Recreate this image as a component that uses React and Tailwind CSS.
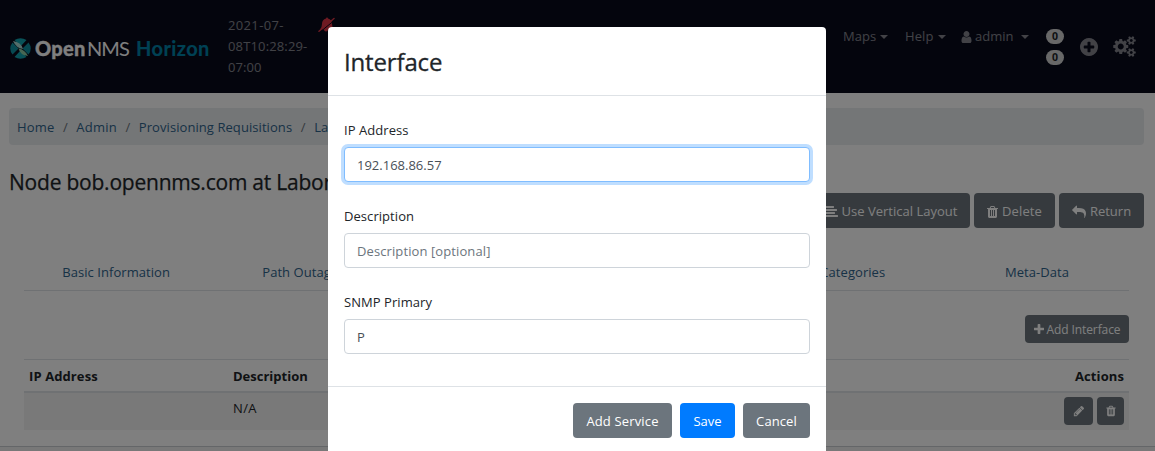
import React from "react";

const ICONS = {
  trash: "M704 1376v-704q0-14-9-23t-23-9h-64q-14 0-23 9t-9 23v704q0 14 9 23t23 9h64q14 0 23-9t9-23zm256 0v-704q0-14-9-23t-23-9h-64q-14 0-23 9t-9 23v704q0 14 9 23t23 9h64q14 0 23-9t9-23zm256 0v-704q0-14-9-23t-23-9h-64q-14 0-23 9t-9 23v704q0 14 9 23t23 9h64q14 0 23-9t9-23zm-544-992h448l-48-117q-7-9-17-11h-317q-10 2-17 11zm928 32v64q0 14-9 23t-23 9h-96v948q0 83-47 143.500t-113 60.500h-832q-66 0-113-58.500t-47-141.500v-952h-96q-14 0-23-9t-9-23v-64q0-14 9-23t23-9h309l70-167q15-37 54-63t79-26h320q40 0 79 26t54 63l70 167h309q14 0 23 9t9 23z",
  user: "M1536 1399q0 109-62.500 187t-150.500 78h-854q-88 0-150.500-78t-62.500-187q0-85 8.500-160.500t31.500-152 58.500-131 94-89 134.500-34.500q131 128 313 128t313-128q76 0 134.500 34.500t94 89 58.500 131 31.500 152 8.500 160.500zm-256-887q0 159-112.500 271.500t-271.500 112.500-271.500-112.500-112.500-271.500 112.500-271.500 271.500-112.500 271.500 112.500 112.500 271.500z",
  share: "M1792 640q0 26-19 45l-512 512q-19 19-45 19t-45-19-19-45v-256h-224q-98 0-175.500 6t-154 21.500-133 42.500-105.500 69.500-80 101-48.500 138.500-17.500 181q0 55 5 123 0 6 2.500 23.500t2.500 26.500q0 15-8.500 25t-23.500 10q-16 0-28-17-7-9-13-22t-13.500-30-10.500-24q-127-285-127-451 0-199 53-333 162-403 875-403h224v-256q0-26 19-45t45-19 45 19l512 512q19 19 19 45z",
  pencil: "M491 1536l91-91-235-235-91 91v107h128v128h107zm523-928q0-22-22-22-10 0-17 7l-542 542q-7 7-7 17 0 22 22 22 10 0 17-7l542-542q7-7 7-17zm-54-192l416 416-832 832h-416v-416zm683 96q0 53-37 90l-166 166-416-416 166-165q36-38 90-38 53 0 91 38l235 234q37 39 37 91z",
  plus: "M1600 736v192q0 40-28 68t-68 28h-416v416q0 40-28 68t-68 28h-192q-40 0-68-28t-28-68v-416h-416q-40 0-68-28t-28-68v-192q0-40 28-68t68-28h416v-416q0-40 28-68t68-28h192q40 0 68 28t28 68v416h416q40 0 68 28t28 68z",
  plusCircle: "M1344 960v-128q0-26-19-45t-45-19h-256v-256q0-26-19-45t-45-19h-128q-26 0-45 19t-19 45v256h-256q-26 0-45 19t-19 45v128q0 26 19 45t45 19h256v256q0 26 19 45t45 19h128q26 0 45-19t19-45v-256h256q26 0 45-19t19-45zm320-64q0 209-103 385.500t-279.500 279.500-385.500 103-385.500-103-279.500-279.500-103-385.500 103-385.500 279.500-279.500 385.500-103 385.500 103 279.500 279.500 103 385.500z",
  align: "M1792 1344v128q0 26-19 45t-45 19h-1664q-26 0-45-19t-19-45v-128q0-26 19-45t45-19h1664q26 0 45 19t19 45zm-384-384v128q0 26-19 45t-45 19h-1280q-26 0-45-19t-19-45v-128q0-26 19-45t45-19h1280q26 0 45 19t19 45zm256-384v128q0 26-19 45t-45 19h-1536q-26 0-45-19t-19-45v-128q0-26 19-45t45-19h1536q26 0 45 19t19 45zm-384-384v128q0 26-19 45t-45 19h-1152q-26 0-45-19t-19-45v-128q0-26 19-45t45-19h1152q26 0 45 19t19 45z",
};
const SMALL_GEAR =
  "v140q0 16-149 31-12 27-30 52 51 113 51 138 0 4-4 7-122 71-124 71-8 0-46-47t-52-68q-20 2-30 2t-30-2q-14 21-52 68t-46 47q-2 0-124-71-4-3-4-7 0-25 51-138-18-25-30-52-149-15-149-31v-140q0-16 149-31 13-29 30-52-51-113-51-138 0-4 4-7 4-2 35-20t59-34 30-16q8 0 46 46.500t52 67.500q20-2 30-2t30 2q51-71 92-112l6-2q4 0 124 70 4 3 4 7 0 25-51 138 17 23 30 52 149 15 149 31z";
const COGS =
  "M896 896q0-106-75-181t-181-75-181 75-75 181 75 181 181 75 181-75 75-181zm768 512q0-52-38-90t-90-38-90 38-38 90q0 53 37.500 90.500t90.500 37.500 90.500-37.500 37.500-90.500zm0-1024q0-52-38-90t-90-38-90 38-38 90q0 53 37.500 90.500t90.500 37.500 90.500-37.500 37.500-90.500zm-384 421v185q0 10-7 19.500t-16 10.500l-155 24q-11 35-32 76 34 48 90 115 7 11 7 20 0 12-7 19-23 30-82.500 89.500t-78.500 59.500q-11 0-21-7l-115-90q-37 19-77 31-11 108-23 155-7 24-30 24h-186q-11 0-20-7.500t-10-17.500l-23-153q-34-10-75-31l-118 89q-7 7-20 7-11 0-21-8-144-133-144-160 0-9 7-19 10-14 41-53t47-61q-23-44-35-82l-152-24q-10-1-17-9.500t-7-19.500v-185q0-10 7-19.500t16-10.500l155-24q11-35 32-76-34-48-90-115-7-11-7-20 0-12 7-20 22-30 82-89t79-59q11 0 21 7l115 90q34-18 77-32 11-108 23-154 7-24 30-24h186q11 0 20 7.500t10 17.500l23 153q34 10 75 31l118-89q8-7 20-7 11 0 21 8 144 133 144 160 0 8-7 19-12 16-42 54t-45 60q23 48 34 82l152 23q10 2 17 10.500t7 19.500z" +
  "M1920 1338" + SMALL_GEAR + "M1920 314" + SMALL_GEAR;

function Icon({ name, box = "0 0 1792 1792", className }) {
  return (
    <svg viewBox={box} className={"shrink-0 " + className} fill="currentColor">
      <path d={ICONS[name]} />
    </svg>
  );
}

function Logo() {
  return (
    <div className="flex h-[30px] w-[200px] shrink-0 items-center">
      <svg viewBox="0 0 42 42" className="ml-px h-[21px] w-[21px] shrink-0">
        <path fill="#12a5b0" d="M9 4Q21-3 33 4L21 17zM9 38Q21 45 33 38L21 25z" />
        <path fill="#0f93a3" d="M5 9Q-4 21 5 33L17 21zM37 9Q46 21 37 33L25 21z" />
        <path fill="#a9dcd6" d="M6 6Q22 8 26 22Q12 20 6 6z" />
        <path fill="#8fcfa6" d="M36 36Q20 34 17 21Q30 23 36 36z" />
      </svg>
      <div className="ml-[4px] flex whitespace-nowrap font-[Lato] text-[20px] leading-[28px] text-white">
        <span className="w-[52px] font-black tracking-[0.3px] [-webkit-text-stroke:0.3px_currentColor]">Open</span>
        <span className="w-[49px] tracking-[-0.9px]">NMS</span>
        <span className="font-bold tracking-[0.4px] text-[#0082a8] [-webkit-text-stroke:0.2px_currentColor]">Horizon</span>
      </div>
    </div>
  );
}

function BellSlash() {
  return (
    <svg viewBox="0 0 34 30" className="ml-[6px] mt-[17px] h-[15px] w-[17px] shrink-0">
      <path fill="#dc3545" d="M16 3Q16 1 18 1T20 3Q28 5 28 14Q28 20 32 25H20Q20 29 16 29T12 25H4Q8 20 8 14Q8 5 16 3z" />
      <path stroke="#080a1b" strokeWidth="2" d="M2 31.500L35 5" />
      <path stroke="#dc3545" strokeWidth="3" strokeLinecap="round" d="M2 28.500L32 3" />
    </svg>
  );
}

function Caret({ className = "" }) {
  return <span className={"inline-block border-x-[4px] border-t-[4px] border-x-transparent border-t-current " + className} />;
}

function NavBar() {
  return (
    <nav className="flex h-[93px] shrink-0 justify-between bg-[#080a1b] text-white/50">
      <div className="flex pl-[9px]">
        <div className="pt-[33px]"><Logo /></div>
        <div className="ml-[19px] w-[84px] whitespace-nowrap pt-[15px] leading-[21px]">
          <div className="tracking-[0.35px]">2021-07-</div>
          <div className="tracking-[0.15px]">08T10:28:29-</div>
          <div className="tracking-[0.1px]">07:00</div>
        </div>
        <BellSlash />
      </div>
      <div className="flex">
        <div className="mt-[26px] flex h-[21px] w-[62px] items-center"><span className="tracking-[0.05px]">Maps</span><Caret className="ml-[4px]" /></div>
        <div className="mt-[26px] flex h-[21px] w-[56px] items-center"><span className="tracking-[0.1px]">Help</span><Caret className="ml-[4px]" /></div>
        <div className="mt-[26px] flex h-[21px] w-[85px] items-center"><Icon name="user" box="256 0 1280 1792" className="h-[14px] w-[11px]" /><span className="ml-[3px]">admin</span><Caret className="ml-[8px]" /></div>
        <div className="flex w-[18px] flex-col gap-[6px] pt-[29px]">
          {[0, 1].map((i) => (
            <span key={i} className="flex h-[15px] items-center justify-center rounded-full bg-[#d0d0d0] pt-px text-[10.5px] font-bold text-[#212529]">0</span>
          ))}
        </div>
        <Icon name="plusCircle" box="128 128 1536 1536" className="ml-[16px] mt-[38px] h-[18px] w-[18px]" />
        <svg viewBox="0 0 1920 1792" className="ml-[15px] mr-[19px] mt-[36px] h-[21px] w-[23px]" fill="currentColor"><path d={COGS} /></svg>
      </div>
    </nav>
  );
}

function Crumb({ children, first, className = "" }) {
  return (
    <span className="flex whitespace-nowrap">
      {!first && <span className="w-[22px] text-center text-[#6c757d]">/</span>}
      <span className={className}>{children}</span>
    </span>
  );
}

const grayButton = "flex items-center justify-center whitespace-nowrap rounded-[4px] bg-[#6c757d] text-white ";

function Page() {
  return (
    <div className="flex h-full flex-col bg-white">
      <NavBar />
      <div className="ml-[9px] mr-[11px] mt-[15px] flex h-[37px] shrink-0 items-center rounded-[4px] bg-[#e9ecef] pl-[8px] pt-[2px] text-[#2f648c]">
        <Crumb first className="tracking-[0.15px]">Home</Crumb>
        <Crumb className="tracking-[0.2px]">Admin</Crumb>
        <Crumb className="tracking-[0.07px]">Provisioning Requisitions</Crumb>
        <Crumb>La</Crumb>
      </div>
      <h4 className="ml-[9px] mt-[24px] h-[24px] whitespace-nowrap text-[21px] font-medium leading-[27px] tracking-[-0.22px] [-webkit-text-stroke:0.25px_currentColor]">Node bob.opennms.com at Labor</h4>
      <div className="mr-[11px] flex h-[35px] shrink-0 justify-end gap-[4px]">
        <div className={grayButton + "w-[158px] gap-[3px] pt-[2px]"}><Icon name="align" className="h-[14px] w-[14px]" /><span className="tracking-[0.02px]">Use Vertical Layout</span></div>
        <div className={grayButton + "w-[81px] gap-[4px] pt-[2px]"}><Icon name="trash" box="192 0 1408 1792" className="h-[14px] w-[11px]" /><span className="tracking-[0.1px]">Delete</span></div>
        <div className={grayButton + "w-[85px] gap-[4px] pt-[2px]"}><Icon name="share" className="h-[14px] w-[14px] -scale-x-100" /><span>Return</span></div>
      </div>
      <div className="ml-[24px] mr-[26px] mt-[25px] flex h-[38px] shrink-0 border-b border-[#dee2e6] pt-[9px] leading-[21px] text-[#2f648c]">
        {["Basic Information", "Path Outage", "Interfaces", "Assets", "Categories", "Meta-Data"].map((t) => (
          <span key={t} className="flex-1 text-center tracking-[0.06px]">{t}</span>
        ))}
      </div>
      <div className={grayButton + "ml-[1025px] mt-[24px] h-[28px] w-[104px] shrink-0 gap-[3px] pt-[2px] text-[12px] leading-[18px]"}><Icon name="plus" box="192 128 1408 1408" className="-mt-[2px] h-[10px] w-[10px]" /><span className="tracking-[-0.1px]">Add Interface</span></div>
      <div className="ml-[24px] mr-[26px] mt-[16px] flex h-[34px] shrink-0 items-center justify-between border-b-2 border-t border-[#dee2e6] px-[5px] pt-[2px] font-bold">
        <span className="w-[204px] tracking-[0.1px]">IP Address</span><span className="flex-1">Description</span><span className="tracking-[0.1px]">Actions</span>
      </div>
      <div className="ml-[24px] mr-[26px] flex h-[37px] shrink-0 bg-[#f2f2f2] px-[5px]">
        <span className="ml-[204px] flex-1 pt-[5px] leading-[21px] tracking-[0.4px]">N/A</span>
        <div className="flex gap-[4px] pt-[4px]">
          <div className={grayButton + "h-[28px] w-[29px]"}><Icon name="pencil" className="h-[12px] w-[12px]" /></div>
          <div className={grayButton + "h-[28px] w-[27px]"}><Icon name="trash" box="192 0 1408 1792" className="h-[12px] w-[10px]" /></div>
        </div>
      </div>
      <footer className="mt-[16px] flex-1 border-t border-[#c8ccd0] bg-[#f0f0f0]" />
    </div>
  );
}

function Field({ label, children, focused }) {
  return (
    <div className="mb-[24px] h-[62px]">
      <div className="h-[27px] leading-[21px] tracking-[0.06px]">{label}</div>
      <div className={"flex h-[35px] items-center rounded-[4px] border bg-white px-[12px] pt-[2px] text-[#495057] " + (focused ? "border-[#80bdff] shadow-[0_0_0_3px_#bfdeff]" : "border-[#ced4da]")}>{children}</div>
    </div>
  );
}

function Modal() {
  return (
    <div className="flex h-[427px] w-[498px] flex-col rounded-[4px] bg-white">
      <div className="flex h-[69px] items-center border-b border-[#dee2e6] px-[16px] pt-[2px] text-[24px] font-medium tracking-[-0.15px] [-webkit-text-stroke:0.3px_currentColor]">Interface</div>
      <div className="h-[290px] px-[16px] pt-[24px]">
        <Field label="IP Address" focused>192.168.86.57</Field>
        <Field label="Description"><span className="tracking-[0.1px] text-[#6c757d]">Description [optional]</span></Field>
        <Field label="SNMP Primary">P</Field>
      </div>
      <div className="flex flex-1 gap-[8px] border-t border-[#dee2e6] pl-[245px] pt-[16px]">
        <div className={grayButton + "h-[35px] w-[99px] pt-[2px] tracking-[0.15px]"}>Add Service</div>
        <div className="flex h-[35px] w-[55px] items-center justify-center rounded-[4px] bg-[#007bff] pt-[2px] text-white">Save</div>
        <div className={grayButton + "h-[35px] w-[67px] pt-[2px] tracking-[0.1px]"}>Cancel</div>
      </div>
    </div>
  );
}

export default function App() {
  return (
    <div className="relative h-[451px] w-[1155px] overflow-hidden font-['Open_Sans','Noto_Sans',sans-serif] text-[13px] text-[#212529]">
      <Page />
      <div className="absolute inset-0 flex items-start bg-black/50 pl-[328px] pt-[27px]">
        <Modal />
      </div>
    </div>
  );
}
